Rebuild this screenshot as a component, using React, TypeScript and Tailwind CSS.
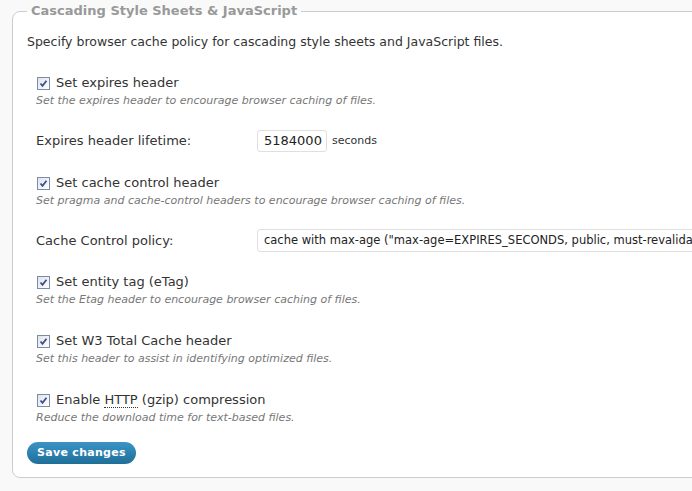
import React from "react";

const font = { fontFamily: '"DejaVu Sans", Verdana, sans-serif' };

function Check() {
  return (
    <span className="inline-flex w-[13px] h-[13px] border border-[#7a8ca8] bg-gradient-to-br from-[#dfe3ea] to-[#ffffff] items-center justify-center shrink-0">
      <svg width="9" height="9" viewBox="0 0 9 9">
        <path d="M1.5 4.5 L3.5 6.8 L7.5 1.8" fill="none" stroke="#3a4f94" strokeWidth="1.8" />
      </svg>
    </span>
  );
}

function Option({ label, desc }: { label: React.ReactNode; desc: string }) {
  return (
    <div>
      <div className="flex items-center gap-[6px] h-[18px] pl-[10px] text-[13px] text-[#333]">
        <Check />
        <span>{label}</span>
      </div>
      <div className="h-[18px] leading-[18px] pl-[9px] text-[11px] italic text-[#777]">{desc}</div>
    </div>
  );
}

export default function App() {
  return (
    <div className="w-[692px] h-[491px] overflow-hidden bg-[#f9f9f9]" style={font}>
      <fieldset className="ml-[12px] mt-[3px] w-[740px] border border-[#cccccc] rounded-l-[8px] bg-white pl-[14px] pb-[13px]">
        <legend className="px-[4px] h-[16px] leading-[16px] text-[13px] font-bold text-[#999]">
          Cascading Style Sheets &amp; JavaScript
        </legend>

        <p className="mt-[14px] h-[18px] leading-[18px] text-[12.5px] text-[#333]">
          Specify browser cache policy for cascading style sheets and JavaScript files.
        </p>

        <div className="mt-[23px]">
          <Option label="Set expires header" desc="Set the expires header to encourage browser caching of files." />
        </div>

        <div className="mt-[20px] flex items-center h-[22px] pl-[9px] text-[13px] text-[#333]">
          <span className="w-[221px]">Expires header lifetime:</span>
          <span className="h-[22px] w-[70px] border border-[#dfdfdf] rounded-[3px] px-[6px] leading-[20px] text-[13px] text-[#222]">5184000</span>
          <span className="ml-[5px] text-[11px] text-[#333]">seconds</span>
        </div>

        <div className="mt-[22px]">
          <Option label="Set cache control header" desc="Set pragma and cache-control headers to encourage browser caching of files." />
        </div>

        <div className="mt-[19px] flex items-center h-[23px] pl-[9px] text-[13px] text-[#333]">
          <span className="w-[221px]">Cache Control policy:</span>
          <span className="h-[23px] flex-1 border border-[#dfdfdf] rounded-[3px] px-[6px] leading-[21px] text-[11.5px] text-[#222] whitespace-nowrap overflow-hidden">
            cache with max-age ("max-age=EXPIRES_SECONDS, public, must-revalidate, proxy-revalidate")
          </span>
        </div>

        <div className="mt-[21px]">
          <Option label="Set entity tag (eTag)" desc="Set the Etag header to encourage browser caching of files." />
        </div>

        <div className="mt-[23px]">
          <Option label="Set W3 Total Cache header" desc="Set this header to assist in identifying optimized files." />
        </div>

        <div className="mt-[23px]">
          <Option
            label={
              <>
                Enable <abbr className="no-underline border-b border-dotted border-[#333]">HTTP</abbr> (gzip) compression
              </>
            }
            desc="Reduce the download time for text-based files."
          />
        </div>

        <button className="mt-[15px] h-[22px] px-[10px] rounded-full bg-gradient-to-b from-[#3a94c6] to-[#1f6f98] text-white text-[11px] font-bold tracking-[0.3px]">
          Save changes
        </button>
      </fieldset>
    </div>
  );
}
